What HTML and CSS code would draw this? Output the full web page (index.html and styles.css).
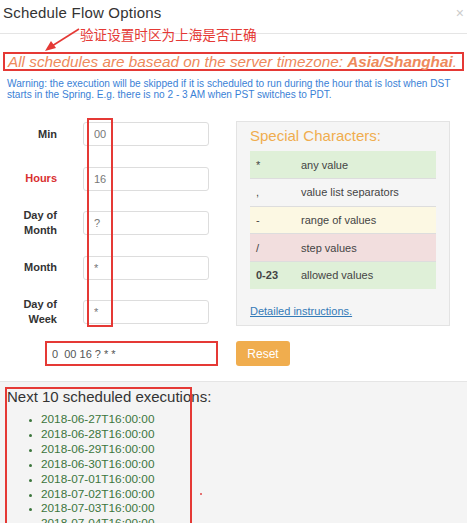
FILE: index.html
```html
<!DOCTYPE html>
<html>
<head>
    <meta charset="utf-8">
    <title>Schedule Flow Options</title>
    <link rel="stylesheet" href="styles.css">
</head>
<body>
    <div class="modal">
        <div class="modal-header">
            <h4 class="modal-title">Schedule Flow Options</h4>
            <span class="close">&times;</span>
        </div>
        <div class="note">
            <svg class="note-arrow" width="40" height="26" viewBox="0 0 40 26">
                <line x1="37" y1="2" x2="10" y2="19" stroke="#e53935" stroke-width="1.6"/>
                <polygon points="3,24 9,14 14,21" fill="#e53935"/>
            </svg>
            <span class="note-text">验证设置时区为上海是否正确</span>
        </div>
        <div class="modal-body">
            <p class="timezone">All schedules are basead on the server timezone: <b>Asia/Shanghai</b>.</p>
            <p class="warning">Warning: the execution will be skipped if it is scheduled to run during the hour that is lost when DST starts in the Spring. E.g. there is no 2 - 3 AM when PST switches to PDT.</p>

            <div class="cron-form">
                <div class="fields">
                    <label>Min</label>
                    <input type="text" value="00">
                    <label class="required">Hours</label>
                    <input type="text" value="16">
                    <label>Day of<br>Month</label>
                    <input type="text" value="?">
                    <label>Month</label>
                    <input type="text" value="*">
                    <label>Day of<br>Week</label>
                    <input type="text" value="*">
                    <div class="mark-column"></div>
                </div>
                <div class="special">
                    <h4>Special Characters:</h4>
                    <table>
                        <tr class="success"><td>*</td><td>any value</td></tr>
                        <tr><td>,</td><td>value list separators</td></tr>
                        <tr class="warning-row"><td>-</td><td>range of values</td></tr>
                        <tr class="danger"><td>/</td><td>step values</td></tr>
                        <tr class="success"><td><b>0-23</b></td><td>allowed values</td></tr>
                    </table>
                    <a href="#">Detailed instructions.</a>
                </div>
            </div>

            <div class="cron-row">
                <input type="text" class="cron-output" value="0  00 16 ? * *">
                <button class="btn-reset">Reset</button>
            </div>
        </div>
        <div class="modal-footer">
            <h3>Next 10 scheduled executions:</h3>
            <ul class="next-runs">
                <li>2018-06-27T16:00:00</li>
                <li>2018-06-28T16:00:00</li>
                <li>2018-06-29T16:00:00</li>
                <li>2018-06-30T16:00:00</li>
                <li>2018-07-01T16:00:00</li>
                <li>2018-07-02T16:00:00</li>
                <li>2018-07-03T16:00:00</li>
                <li>2018-07-04T16:00:00</li>
                <li>2018-07-05T16:00:00</li>
                <li>2018-07-06T16:00:00</li>
            </ul>
            <div class="mark-list"></div>
            <span class="dot"></span>
        </div>
    </div>
</body>
</html>
```
FILE: styles.css
```css
* {
    margin: 0;
    padding: 0;
    box-sizing: border-box;
}
html, body {
    height: 100%;
    overflow: hidden;
}
body {
    font-family: "Liberation Sans", Arial, sans-serif;
    color: #333;
    background: #fff;
}
.modal {
    position: relative;
    height: 100%;
    display: flex;
    flex-direction: column;
}
.modal-header {
    flex-shrink: 0;
    display: flex;
    justify-content: space-between;
    align-items: center;
    height: 34px;
    padding: 0 3px 8px 3px;
    border-bottom: 1px solid #e5e5e5;
}
.modal-title {
    font-size: 15px;
    font-weight: normal;
    letter-spacing: 0.2px;
}
.close {
    font-size: 14px;
    color: #ccc;
}
.note {
    position: absolute;
    top: 25px;
    left: 42px;
    display: flex;
    align-items: flex-start;
}
.note-arrow {
    margin-top: 2px;
}
.note-text {
    font-family: "Noto Sans CJK SC", sans-serif;
    font-size: 13.6px;
    color: #e53935;
    line-height: 18px;
    margin-left: -2px;
}
.modal-body {
    flex-shrink: 0;
    padding: 18px 3px 0 3px;
}
.timezone {
    border: 2px solid #e53935;
    height: 19px;
    padding: 0 0 0 3px;
    font-size: 15.3px;
    font-style: italic;
    line-height: 15px;
    color: #ee8a5b;
    white-space: nowrap;
}
.warning {
    font-size: 10.1px;
    line-height: 11px;
    color: #3a7fd6;
    padding: 7px 4px 0 4px;
}
.cron-form {
    display: flex;
    margin: 21px 0 0 -3px;
}
.fields {
    position: relative;
    display: grid;
    grid-template-columns: 57px 126px;
    grid-auto-rows: 24px;
    column-gap: 26px;
    row-gap: 20.5px;
    width: 209px;
    padding-top: 1px;
}
.fields label {
    font-size: 11px;
    font-weight: bold;
    text-align: right;
    line-height: 15px;
    align-self: center;
}
.fields label.required {
    color: #d92f2f;
}
.fields input {
    height: 24px;
    border: 1px solid #ddd;
    border-radius: 3px;
    padding: 0 10px;
    font-family: inherit;
    font-size: 11px;
    color: #777;
}
.mark-column {
    position: absolute;
    left: 87px;
    top: -3px;
    width: 26px;
    height: 209px;
    border: 2px solid #e53935;
}
.special {
    width: 214px;
    height: 205px;
    margin-left: 27px;
    background: #f5f5f5;
    border: 1px solid #e3e3e3;
    padding: 5px 13px 0 13px;
}
.special h4 {
    font-size: 15px;
    font-weight: normal;
    color: #f0ad4e;
    line-height: 18px;
    margin-bottom: 6px;
}
.special table {
    width: 186px;
    border-collapse: collapse;
    font-size: 11px;
    color: #444;
}
.special td {
    height: 27.6px;
    padding: 0 6px;
    border-top: 1px solid #ddd;
}
.special tr:first-child td {
    border-top: none;
}
.special td:first-child {
    width: 45px;
}
.special tr.success td {
    background: #dff0d8;
}
.special tr.warning-row td {
    background: #fcf8e3;
}
.special tr.danger td {
    background: #f2dede;
}
.special a {
    display: block;
    margin-top: 16px;
    font-size: 11px;
    color: #337ab7;
}
.cron-row {
    display: flex;
    align-items: center;
    margin-top: 15px;
    padding-left: 42px;
    height: 25px;
}
.cron-output {
    width: 173px;
    height: 25px;
    border: 2px solid #e53935;
    padding: 0 5px;
    font-family: inherit;
    font-size: 11px;
    color: #555;
}
.btn-reset {
    margin-left: 18px;
    width: 54px;
    height: 25px;
    border: none;
    border-radius: 3px;
    background: #f0ad4e;
    color: #fff;
    font-family: inherit;
    font-size: 12px;
}
.modal-footer {
    position: relative;
    flex: 1;
    margin-top: 15px;
    background: #f4f4f4;
    border-top: 1px solid #e5e5e5;
    padding: 6px 7px 0 7px;
}
.modal-footer h3 {
    font-size: 15px;
    font-weight: normal;
    line-height: 18px;
}
.next-runs {
    margin-top: 6px;
    padding-left: 34px;
    font-size: 11.8px;
    line-height: 14.9px;
    color: #3c763d;
}
.next-runs li::marker {
    font-size: 9px;
}
.mark-list {
    position: absolute;
    left: 5px;
    top: 5px;
    width: 187px;
    height: 200px;
    border: 2px solid #e53935;
}
.dot {
    position: absolute;
    left: 200px;
    top: 111px;
    width: 2px;
    height: 2px;
    background: #e57373;
}
```
